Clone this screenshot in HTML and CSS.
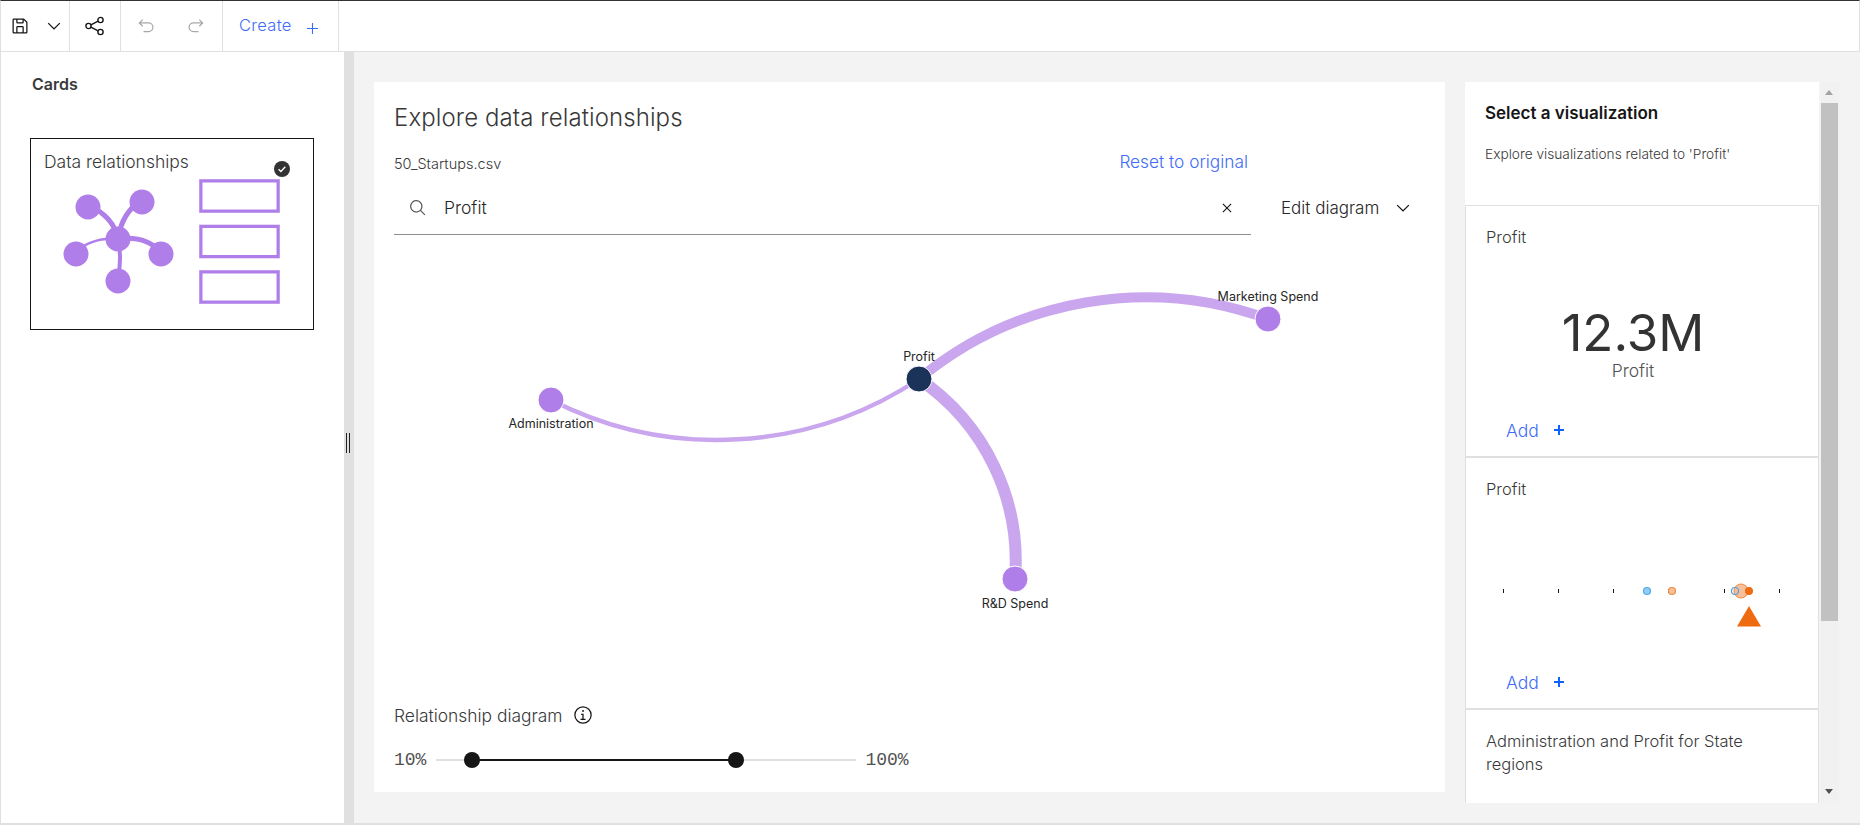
FILE: index.html
```html
<!DOCTYPE html>
<html lang="en">
<head>
<meta charset="utf-8">
<title>Explore data relationships</title>
<link rel="stylesheet" href="styles.css">
</head>
<body>
<div class="app">
  <header class="toolbar">
    <div class="tb-group tb-save">
      <svg class="icon-tb" viewBox="0 0 32 32"><path d="M27.71,9.29l-5-5A1,1,0,0,0,22,4H6A2,2,0,0,0,4,6V26a2,2,0,0,0,2,2H26a2,2,0,0,0,2-2V10A1,1,0,0,0,27.71,9.29ZM12,6h8v4H12Zm8,20H12V18h8Zm2,0V18a2,2,0,0,0-2-2H12a2,2,0,0,0-2,2v8H6V6h4v4a2,2,0,0,0,2,2h8a2,2,0,0,0,2-2V6.41l4,4V26Z"/></svg>
      <svg class="icon-tb" viewBox="0 0 32 32"><path d="M16 22L6 12l1.4-1.4 8.6 8.6 8.6-8.6L26 12z"/></svg>
    </div>
    <div class="tb-group tb-share">
      <svg class="icon-share" viewBox="0 0 20 20"><g fill="none" stroke="#161616" stroke-width="1.4"><circle cx="3.5" cy="10" r="2.6"/><circle cx="15.5" cy="4" r="2.6"/><circle cx="15.5" cy="16" r="2.6"/><path d="M5.9 8.8l7.2-3.6M5.9 11.2l7.2 3.6"/></g></svg>
    </div>
    <div class="tb-group tb-history">
      <svg class="icon-tb muted" viewBox="0 0 32 32"><path d="M20,10H7.8149l3.5874-3.5859L10,5,4,11,10,17l1.4023-1.4146L7.8179,12H20a6,6,0,0,1,0,12H12v2h8a8,8,0,0,0,0-16Z"/></svg>
      <svg class="icon-tb muted" viewBox="0 0 32 32"><path d="M12,10H24.1851L20.5977,6.4141,22,5,28,11,22,17l-1.4023-1.4146L24.1821,12H12a6,6,0,0,0,0,12h8v2H12a8,8,0,0,1,0-16Z"/></svg>
    </div>
    <div class="tb-group tb-create">
      <span class="create-label">Create</span>
      <svg class="icon-plus" viewBox="0 0 12 12"><path d="M5.4 0h1.2v5.4H12v1.2H6.6V12H5.4V6.6H0V5.4h5.4z"/></svg>
    </div>
  </header>

  <main class="workspace">
    <aside class="sidebar">
      <h2 class="sidebar-title">Cards</h2>
      <div class="rel-card">
        <div class="rel-card-title">Data relationships</div>
        <svg class="rel-check" viewBox="0 0 16 16"><circle cx="8" cy="8" r="8" fill="#333"/><path d="M4.6 8.2l2.3 2.2 4.4-4.6" fill="none" stroke="#fff" stroke-width="1.4"/></svg>
        <svg class="rel-art" viewBox="0 0 260 140">
          <g fill="none" stroke="#b07ee8">
            <path d="M58 38Q84 50 88 72" stroke-width="5"/>
            <path d="M112 33Q92 45 88 72" stroke-width="5"/>
            <path d="M46 85Q62 70 88 72" stroke-width="2.5"/>
            <path d="M131 85Q115 68 88 72" stroke-width="5"/>
            <path d="M88 72Q92 90 88 112" stroke-width="4"/>
          </g>
          <g fill="#b07ee8">
            <circle cx="58" cy="40" r="12.5"/><circle cx="112" cy="35" r="12.5"/>
            <circle cx="88" cy="72" r="12.5"/><circle cx="46" cy="87" r="12.5"/>
            <circle cx="131" cy="87" r="12.5"/><circle cx="88" cy="114" r="12.5"/>
          </g>
          <g fill="none" stroke-width="1" stroke="#d3b8f2">
            <rect x="169.500" y="12.500" width="80" height="33"/>
            <rect x="169.500" y="58" width="80" height="33"/>
            <rect x="169.500" y="103.500" width="80" height="33"/>
          </g>
          <g fill="none" stroke="#b07ee8" stroke-width="3">
            <rect x="171" y="14" width="77" height="30"/>
            <rect x="171" y="59.500" width="77" height="30"/>
            <rect x="171" y="105" width="77" height="30"/>
          </g>
        </svg>
      </div>
    </aside>
    <div class="handle"><span class="grip"></span></div>

    <section class="explore">
      <h1 class="explore-title">Explore data relationships</h1>
      <div class="file-row">
        <span class="file-name">50_Startups.csv</span>
        <a class="reset-link">Reset to original</a>
      </div>
      <div class="search-row">
        <div class="search-box">
          <svg class="icon-search" viewBox="0 0 32 32"><path d="M29,27.5859l-7.5521-7.5521a11.0177,11.0177,0,1,0-1.4141,1.4141L27.5859,29ZM4,13a9,9,0,1,1,9,9A9.01,9.01,0,0,1,4,13Z"/></svg>
          <span class="search-value">Profit</span>
          <svg class="icon-close" viewBox="0 0 32 32"><path d="M24 9.4L22.6 8 16 14.600 9.400 8 8 9.400 14.600 16 8 22.600 9.400 24 16 17.400 22.600 24 24 22.600 17.400 16 24 9.400z"/></svg>
        </div>
        <div class="edit-diagram">
          <span>Edit diagram</span>
          <svg class="icon-chevron" viewBox="0 0 32 32"><path d="M16 22L6 12l1.400-1.400 8.600 8.600 8.600-8.600L26 12z"/></svg>
        </div>
      </div>
      <svg class="diagram" viewBox="374 235 1071 472">
        <g fill="none" stroke="#c9a6ee">
          <path d="M551 400A365 365 0 0 0 919 379" stroke-width="4.500"/>
          <path d="M919 379A356 356 0 0 1 1268 319" stroke-width="10"/>
          <path d="M919 379A220 220 0 0 1 1015 579" stroke-width="12"/>
        </g>
        <g stroke="#fff" stroke-width="1">
          <circle cx="551" cy="400" r="13" fill="#b07ee8"/>
          <circle cx="1268" cy="319" r="13" fill="#b07ee8"/>
          <circle cx="1015" cy="579" r="13" fill="#b07ee8"/>
          <circle cx="919" cy="379" r="13" fill="#1c3359"/>
        </g>
        <g class="node-label">
          <text x="919" y="361">Profit</text>
          <text x="1268" y="301">Marketing Spend</text>
          <text x="551" y="428">Administration</text>
          <text x="1015" y="608">R&amp;D Spend</text>
        </g>
      </svg>
      <div class="slider-label">
        <span>Relationship diagram</span>
        <svg class="icon-info" viewBox="0 0 32 32"><path d="M17 22v-8h-4v2h2v6h-3v2h8v-2h-3z"/><path d="M16 8a1.500 1.500 0 1 0 1.500 1.500A1.500 1.500 0 0 0 16 8z"/><path d="M16 30a14 14 0 1 1 14-14 14 14 0 0 1-14 14zm0-26a12 12 0 1 0 12 12A12 12 0 0 0 16 4z"/></svg>
      </div>
      <div class="slider-row">
        <span class="slider-end">10%</span>
        <div class="slider-track">
          <span class="slider-active"></span>
          <span class="slider-thumb thumb-low"></span>
          <span class="slider-thumb thumb-high"></span>
        </div>
        <span class="slider-end">100%</span>
      </div>
    </section>

    <section class="viz">
      <div class="viz-list">
        <div class="viz-head">
          <h2 class="viz-title">Select a visualization</h2>
          <p class="viz-sub">Explore visualizations related to 'Profit'</p>
        </div>
        <article class="viz-card">
          <h3 class="card-title">Profit</h3>
          <div class="card-body kpi">
            <div class="kpi-value">12.3M</div>
            <div class="kpi-label">Profit</div>
          </div>
          <div class="card-add"><span>Add</span><svg class="icon-add" viewBox="0 0 10 10"><path d="M4 0h2v4h4v2H6v4H4V6H0V4h4z"/></svg></div>
        </article>
        <article class="viz-card">
          <h3 class="card-title">Profit</h3>
          <div class="card-body">
            <svg class="strip" viewBox="1466 520 352 120">
              <g stroke="#161616" stroke-width="1">
                <path d="M1503.500 590v4M1558.500 590v4M1613.500 590v4M1668.500 590v4M1724.500 590v4M1779.500 590v4"/>
              </g>
              <circle cx="1647" cy="592" r="3.500" fill="#8fcdf5" stroke="#4fa9ea" stroke-width="1.200"/>
              <circle cx="1672" cy="592" r="3.500" fill="#f7c09a" stroke="#ee8a45" stroke-width="1.200"/>
              <circle cx="1741" cy="592" r="7" fill="#f7c09a" stroke="#ee8a45" stroke-width="1"/>
              <circle cx="1749" cy="592" r="4" fill="#ee6b12"/>
              <circle cx="1735" cy="592" r="3.500" fill="none" stroke="#4fa0de" stroke-width="1.200"/>
              <path d="M1749 607l12 20.500h-24z" fill="#ee6b12"/>
            </svg>
          </div>
          <div class="card-add"><span>Add</span><svg class="icon-add" viewBox="0 0 10 10"><path d="M4 0h2v4h4v2H6v4H4V6H0V4h4z"/></svg></div>
        </article>
        <article class="viz-card">
          <h3 class="card-title">Administration and Profit for State regions</h3>
        </article>
      </div>
      <div class="scrollbar">
        <span class="arrow-up"></span>
        <span class="thumb"></span>
        <span class="arrow-down"></span>
      </div>
    </section>
  </main>
</div>
</body>
</html>
```

FILE: styles.css
```css
* { box-sizing: border-box; }
html, body { margin: 0; height: 100%; overflow: hidden; }
body {
  font-family: Inter, "Noto Sans", sans-serif;
  color: #393939;
  background: #f3f3f3;
}
.app { height: 825px; display: flex; flex-direction: column; }

/* toolbar */
.toolbar {
  flex: none;
  height: 52px;
  display: flex;
  background: #fff;
  border-top: 1px solid #333;
  border-left: 1px solid #e0e0e0;
  border-right: 1px solid #e0e0e0;
  border-bottom: 1px solid #e0e0e0;
}
.tb-group { display: flex; align-items: center; border-right: 1px solid #e0e0e0; }
.tb-save { width: 69px; padding: 0 5px 0 9px; justify-content: space-between; }
.tb-share { width: 51px; justify-content: center; }
.tb-history { width: 102px; padding: 0 16px 0 15px; justify-content: space-between; }
.tb-create { width: 116px; padding-left: 16px; }
.icon-tb { width: 20px; height: 20px; fill: #161616; }
.icon-tb.muted { fill: #a8a8a8; }
.icon-share { width: 20px; height: 20px; }
.create-label { color: #3f6cf6; font-size: 16.500px; font-weight: 300; letter-spacing: .3px; margin-top: -2px; }
.icon-plus { width: 11px; height: 11px; fill: #3f6cf6; margin: 5px 0 0 15px; }

/* layout */
.workspace {
  flex: 1;
  min-height: 0;
  display: flex;
  border-left: 1px solid #e0e0e0;
  border-bottom: 2px solid #e0e0e0;
}
.sidebar { flex: none; width: 343px; background: #fff; padding: 22px 0 0 29px; }
.sidebar-title { margin: 0 0 0 2px; font-size: 16px; line-height: 20px; font-weight: 600; color: #393939; }
.handle {
  flex: none;
  width: 10px;
  background: #e0e0e0;
  display: flex;
  align-items: flex-start;
  padding: 381px 0 0 2px;
}
.grip { width: 4px; height: 20px; border-left: 1px solid #222; border-right: 1px solid #222; }

.rel-card {
  position: relative;
  width: 284px;
  height: 192px;
  margin-top: 44px;
  border: 1px solid #161616;
}
.rel-card-title { position: absolute; left: 13px; top: 13px; font-size: 17.500px; font-weight: 300; line-height: 20px; }
.rel-check { position: absolute; left: 243px; top: 22px; width: 16px; height: 16px; }
.rel-art { position: absolute; left: -1px; top: 28px; width: 260px; height: 140px; }

/* explore */
.explore {
  flex: none;
  width: 1071px;
  height: 710px;
  margin: 30px 0 0 20px;
  padding: 20px 0 0 20px;
  background: #fff;
}
.explore-title { margin: 0; font-size: 24px; letter-spacing: .1px; line-height: 32px; font-weight: 300; color: #393939; }
.file-row {
  display: flex;
  justify-content: space-between;
  align-items: center;
  width: 854px;
  height: 20px;
  margin-top: 19px;
}
.file-name { font-size: 14.500px; font-weight: 300; color: #393939; }
.reset-link { font-size: 17.300px; font-weight: 300; color: #3f6cf6; margin-top: -3px; }
.search-row { display: flex; height: 51px; margin-top: 11px; }
.search-box {
  width: 857px;
  height: 51px;
  display: flex;
  align-items: center;
  padding: 0 15px 3px 15px;
  border-bottom: 1px solid #8d8d8d;
}
.icon-search { width: 18px; height: 18px; fill: #525252; }
.search-value { flex: 1; margin-left: 17px; font-size: 17.500px; font-weight: 300; color: #262626; }
.icon-close { width: 18px; height: 18px; fill: #161616; }
.edit-diagram {
  display: flex;
  align-items: center;
  padding: 0 0 3px 30px;
  font-size: 17px;
  font-weight: 300;
  color: #262626;
  height: 51px;
}
.icon-chevron { width: 20px; height: 20px; fill: #161616; margin-left: 14px; }
.diagram { display: block; width: 1071px; height: 472px; margin-left: -20px; }
.node-label text { font-size: 12.500px; font-weight: 400; text-anchor: middle; fill: #262626; }
.slider-label { display: flex; align-items: center; height: 20px; margin-top: -2px; font-size: 17.400px; font-weight: 300; color: #393939; }
.icon-info { width: 20px; height: 20px; fill: #161616; margin-left: 11px; }
.slider-row { display: flex; align-items: center; height: 22px; margin-top: 24px; }
.slider-end { font-family: "Liberation Mono", monospace; font-size: 18px; color: #525252; }
.slider-track { position: relative; width: 420px; height: 2px; margin: 0 9px 0 10px; background: #e0e0e0; }
.slider-active { position: absolute; left: 36px; width: 264px; top: 0; height: 2px; background: #161616; }
.slider-thumb { position: absolute; top: -7px; width: 16px; height: 16px; border-radius: 50%; background: #161616; }
.thumb-low { left: 28px; }
.thumb-high { left: 292px; }

/* visualization list */
.viz {
  flex: none;
  display: flex;
  height: 721px;
  margin: 30px 0 0 20px;
  overflow: hidden;
}
.viz-list { width: 354px; background: #fff; overflow: hidden; }
.viz-head { height: 123px; padding: 20px 20px 0 20px; }
.viz-title { margin: 0; font-size: 17px; line-height: 22px; font-weight: 600; color: #161616; }
.viz-sub { margin: 20px 0 0; font-size: 13.700px; line-height: 20px; font-weight: 300; color: #393939; }
.viz-card { height: 252px; border: 1px solid #e0e0e0; padding: 0 0 0 20px; position: relative; display: flex; flex-direction: column; }
.card-title { margin: 20px 40px 0 0; font-size: 16.500px; line-height: 23px; font-weight: 300; color: #393939; }
.card-body { flex: 1; min-height: 0; margin-left: -20px; }
.kpi { display: flex; flex-direction: column; align-items: center; padding: 56px 0 0 0; margin-right: 18px; }
.kpi-value { font-size: 51px; line-height: 56px; font-weight: 400; color: #333; }
.kpi-label { font-size: 17.500px; line-height: 22px; margin-top: -1px; font-weight: 300; color: #525252; }
.strip { display: block; width: 352px; height: 120px; margin-top: 18px; }
.card-add {
  display: flex;
  align-items: center;
  height: 24px;
  margin: 0 0 14px 20px;
  font-size: 17.500px;
  font-weight: 300;
  color: #3f6cf6;
}
.icon-add { width: 10px; height: 10px; fill: #0f62fe; margin-left: 15px; }

.scrollbar {
  width: 18px;
  margin-left: 2px;
  background: #f1f1f1;
  display: flex;
  flex-direction: column;
  align-items: center;
  position: relative;
}
.thumb { position: absolute; top: 21px; left: 0; width: 17px; height: 518px; background: #c1c1c1; }
.arrow-up { position: absolute; top: 8px; left: 4px; border: 4.500px solid transparent; border-top: 0; border-bottom: 5px solid #a3a3a3; }
.arrow-down { position: absolute; top: 707px; left: 4px; border: 4.500px solid transparent; border-bottom: 0; border-top: 5px solid #505050; }
```
